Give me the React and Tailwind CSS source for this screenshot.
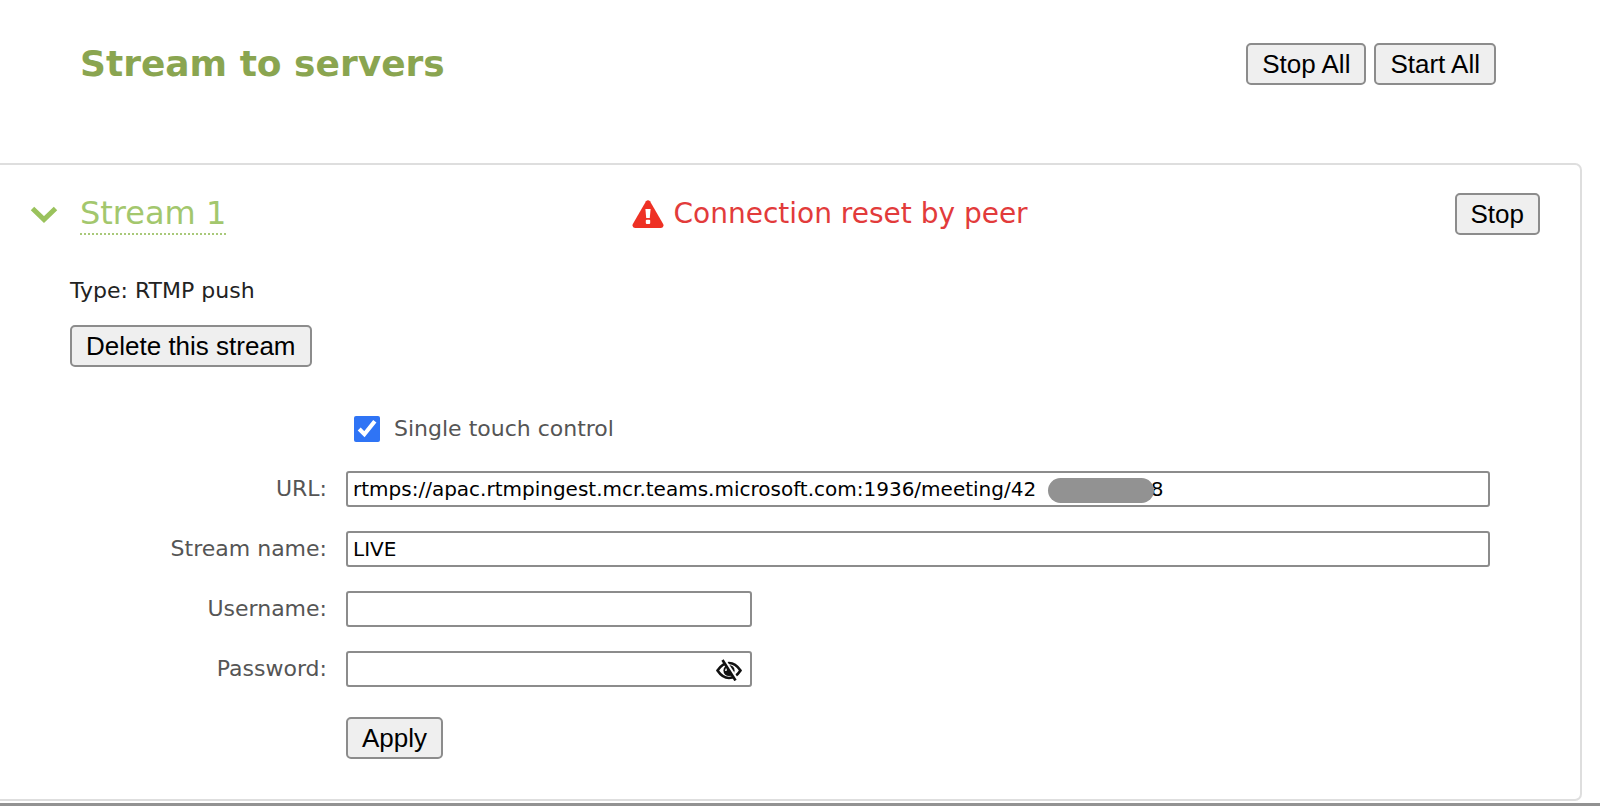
import React, { useState } from "react";

function Button({ children }) {
  return (
    <button
      type="button"
      className="h-[42px] shrink-0 whitespace-nowrap rounded-[5px] border-2 border-[#8c8c8c] bg-[#efefef] px-[14px] font-['Liberation_Sans',Arial,sans-serif] text-[26px] leading-[36px] text-black"
    >
      {children}
    </button>
  );
}

function ChevronDown() {
  return (
    <svg className="w-[28px] h-[17px]" viewBox="0 0 28 17" fill="none" aria-hidden="true">
      <path d="M2.5 2.5L14 13.5L25.5 2.5" stroke="#9ac25c" strokeWidth="5" />
    </svg>
  );
}

function Warning() {
  return (
    <svg className="w-[32px] h-[28px] shrink-0" viewBox="0 0 32 28" aria-hidden="true">
      <path d="M14 1.2Q16 -0.8 18 1.2L31.3 24.2Q32.2 27.8 29 28H3Q-0.2 27.8 0.7 24.2Z" fill="#ee3124" />
      <path d="M13.4 9h5.2l-0.8 9h-3.6z" fill="#fff" />
      <rect x="13.8" y="19.8" width="4.4" height="4.2" rx="1" fill="#fff" />
    </svg>
  );
}

function EyeOff() {
  return (
    <svg className="w-[26px] h-[22px]" viewBox="0 0 26 22" aria-hidden="true">
      <path d="M1.5 11.5Q6.5 4 13 4T24.500 11.500Q19.500 19 13 19T1.500 11.500Z" fill="none" stroke="#111" strokeWidth="2.600" />
      <circle cx="13" cy="11.500" r="5.600" fill="#111" />
      <path d="M11.500 8.500Q9.800 9.800 9.800 12" fill="none" stroke="#fff" strokeWidth="1.500" />
      <path d="M8.500 1L21.500 21" stroke="#fff" strokeWidth="3" />
      <path d="M6.500 1L19.500 21.500" stroke="#111" strokeWidth="2.600" />
    </svg>
  );
}

function Row({ id, label, children }) {
  return (
    <div className="flex items-center">
      <label htmlFor={id} className="w-[327px] shrink-0 text-right text-[22px] leading-[36px] text-[#555]">{label}</label>
      <div className="relative ml-[19px] flex-1">{children}</div>
    </div>
  );
}

const inputClass = "block h-[36px] rounded-[3px] border-2 border-[#8c8c8c] bg-white px-[5px] text-[20px] text-black outline-none";

function App() {

  const [single, setSingle] = useState(true);
  const [url, setUrl] = useState("rtmps://apac.rtmpingest.mcr.teams.microsoft.com:1936/meeting/42\u2007\u2007\u2007\u2007\u2007\u2007\u2007\u200768");
  const [name, setName] = useState("LIVE");
  const [username, setUsername] = useState("");
  const [password, setPassword] = useState("");
  const [visible, setVisible] = useState(false);

  return (
    <div className="w-full bg-white font-['DejaVu_Sans',Verdana,sans-serif]">
      <header className="flex items-start justify-between pt-[43px] pb-[78px] pl-[80px] pr-[104px]">
        <h1 className="text-[36px] leading-[42px] font-bold text-[#8aa550]">Stream to servers</h1>
        <div className="flex gap-[8px]">
          <Button>Stop All</Button>
          <Button>Start All</Button>
        </div>
      </header>

      <section className="mr-[18px] rounded-r-[7px] border-2 border-l-0 border-[#dedede] pt-[28px] pb-[40px]">
        <div className="flex items-center pl-[30px] pr-[40px]">
          <button type="button" aria-label="Collapse"><ChevronDown /></button>
          <div className="ml-[22px] flex-1">
            <a href="#stream-1" className="inline-block border-b-2 border-dotted border-[#a9c97a] text-[32px] leading-[40px] text-[#a3c76d]">Stream 1</a>
          </div>
          <div className="flex flex-[2] items-center gap-[10px] pl-[140px] text-[28px] leading-[42px] text-[#e23b3b]">
            <Warning />
            <span className="whitespace-nowrap">Connection reset by peer</span>
          </div>
          <Button>Stop</Button>
        </div>

        <div className="mt-[38px] pl-[70px]">
          <p className="mb-[16px] text-[22px] leading-[36px] text-[#222]">Type: RTMP push</p>
          <Button>Delete this stream</Button>
        </div>

        <form className="mt-[44px] flex flex-col gap-[24px] pr-[90px]">
          <div className="ml-[354px] flex items-center gap-[14px]">
            <input
              id="single"
              type="checkbox"
              checked={single}
              onChange={(e) => setSingle(e.target.checked)}
              className="h-[26px] w-[26px] accent-[#2f74f5]"
            />
            <label htmlFor="single" className="text-[22px] leading-[36px] text-[#555]">Single touch control</label>
          </div>
          <Row id="url" label="URL:">
            <input id="url" type="text" value={url} onChange={(e) => setUrl(e.target.value)} className={inputClass + " w-full"} />
            <span className="absolute left-[702px] top-[7px] h-[25px] w-[106px] rounded-full bg-[#929292]" />
          </Row>
          <Row id="name" label="Stream name:">
            <input id="name" type="text" value={name} onChange={(e) => setName(e.target.value)} className={inputClass + " w-full"} />
          </Row>
          <Row id="username" label="Username:">
            <input id="username" type="text" value={username} onChange={(e) => setUsername(e.target.value)} className={inputClass + " w-[406px]"} />
          </Row>
          <Row id="password" label="Password:">
            <div className="relative w-[406px]">
              <input id="password" type={visible ? "text" : "password"} value={password} onChange={(e) => setPassword(e.target.value)} className={inputClass + " w-full"} />
              <button type="button" aria-label="Show password" onClick={() => setVisible(!visible)} className="absolute right-[10px] top-[8px]">
                <EyeOff />
              </button>
            </div>
          </Row>
          <div className="ml-[346px] mt-[6px]">
            <Button>Apply</Button>
          </div>
        </form>
      </section>
      <div className="mt-[2px] h-[3px] bg-[#929292]" />
    </div>
  );
}

export default App;
